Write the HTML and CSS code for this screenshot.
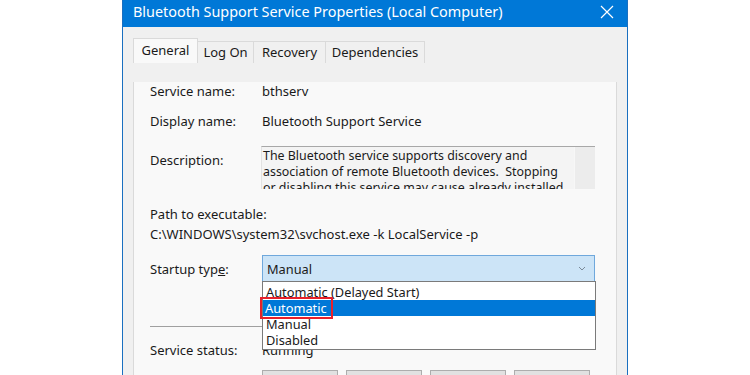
FILE: index.html
```html
<!DOCTYPE html>
<html lang="en">
<head>
  <meta charset="UTF-8">
  <meta name="viewport" content="width=device-width, initial-scale=1.0">
  <title>Bluetooth Support Service Properties</title>
  <link rel="stylesheet" href="styles.css">
</head>
<body>

<div class="window">
  <div class="titlebar">
    <span class="title">Bluetooth Support Service Properties (Local Computer)</span>
    <svg class="close" width="14" height="14" viewBox="0 0 14 14">
      <path d="M1 1 L13 13 M13 1 L1 13" stroke="#fff" stroke-width="1.2" fill="none"/>
    </svg>
  </div>

  <div class="dialog">
    <div class="tabs">
      <div class="tab active">General</div>
      <div class="tab logon">Log On</div>
      <div class="tab recovery">Recovery</div>
      <div class="tab deps">Dependencies</div>
    </div>

    <div class="panel">
      <div class="row first">
        <span class="label">Service name:</span>
        <span>bthserv</span>
      </div>
      <div class="row">
        <span class="label">Display name:</span>
        <span>Bluetooth Support Service</span>
      </div>
      <div class="row desc-row">
        <span class="label">Description:</span>
        <div class="desc">
          <div class="desc-text">The Bluetooth service supports discovery and association of remote Bluetooth devices.&nbsp; Stopping or disabling this service may cause already installed Bluetooth devices to fail to operate properly.</div>
          <div class="scroll"></div>
        </div>
      </div>

      <div class="path">
        <div>Path to executable:</div>
        <div>C:\WINDOWS\system32\svchost.exe -k LocalService -p</div>
      </div>

      <div class="row startup">
        <span class="label">Startup typ<u>e</u>:</span>
        <div class="select">
          <span>Manual</span>
          <svg width="8" height="5" viewBox="0 0 8 5">
            <path d="M1 1 L4 4 L7 1" stroke="#7a8a99" stroke-width="1" fill="none"/>
          </svg>
          <ul class="options">
            <li>Automatic (Delayed Start)</li>
            <li class="selected"><span class="mark">Automatic</span></li>
            <li>Manual</li>
            <li>Disabled</li>
          </ul>
        </div>
      </div>

      <hr class="sep">

      <div class="row">
        <span class="label">Service status:</span>
        <span>Running</span>
      </div>

      <div class="buttons">
        <div class="btn">Start</div>
        <div class="btn">Stop</div>
        <div class="btn">Pause</div>
        <div class="btn">Resume</div>
      </div>
    </div>
  </div>
</div>

</body>
</html>
```

FILE: styles.css
```css
body {
  margin: 0;
  background-color: #fff;
  font-family: 'Noto Sans', 'Open Sans', sans-serif;
  font-size: 13px;
  color: #1a1a1a;
  overflow: hidden;
}

.window {
  width: 504px;
  height: 375px;
  margin-left: 122px;
  border-left: 1px solid #1a6fc0;
  border-right: 1px solid #1a6fc0;
  overflow: hidden;
}

.titlebar {
  height: 27px;
  background-color: #0078d7;
  color: #fff;
  display: flex;
  align-items: flex-start;
  justify-content: space-between;
  padding: 2px 13px 0 10px;
  box-sizing: border-box;
}

.title {
  font-size: 14.4px;
  line-height: 20px;
}

.close {
  margin-top: 3px;
}

.dialog {
  background-color: #f0f0f0;
  height: 348px;
  padding: 12px 10px 0 10px;
}

.tabs {
  display: flex;
  align-items: flex-end;
  height: 24px;
}

.tab {
  height: 21px;
  line-height: 20px;
  text-align: center;
  border: 1px solid #dadada;
  border-bottom: none;
  border-left: none;
  background-color: #f0f0f0;
}

.tab.active {
  width: 63px;
  height: 24px;
  line-height: 22px;
  border-left: 1px solid #dadada;
  background-color: #f9f9f9;
}

.tab.logon {
  width: 55px;
}

.tab.recovery {
  width: 71px;
}

.tab.deps {
  width: 98px;
}

.panel {
  background-color: #f9f9f9;
  border: 1px solid #dadada;
  border-top: none;
  height: 330px;
  padding: 0 21px 0 16px;
}

.row {
  display: grid;
  grid-template-columns: 112px 1fr;
  align-items: center;
  line-height: 18px;
  margin-top: 12px;
}

.row.first {
  margin-top: 19px;
}

.desc-row {
  margin-top: 16px;
  align-items: start;
}

.desc-row .label {
  margin-top: 5px;
}

.desc {
  display: flex;
  height: 42px;
  margin-left: -1px;
  border-top: 1px solid #a8a8a8;
  border-left: 1px solid #e2e2e2;
  background-color: #f4f4f4;
  overflow: hidden;
}

.desc-text {
  flex: 1;
  padding: 1px 4px 0 1px;
  font-size: 12.4px;
  line-height: 16px;
}

.scroll {
  width: 20px;
  background-color: #ececec;
  border-left: 1px solid #f7f7f7;
}

.path {
  margin-top: 15px;
  line-height: 20px;
}

.startup {
  margin-top: 11px;
}

.select {
  position: relative;
  height: 25px;
  display: flex;
  align-items: center;
  justify-content: space-between;
  padding: 0 8px 0 4px;
  background-color: #cce4f7;
  border: 1px solid #6fa8dc;
  font-size: 12.8px;
}

.options {
  position: absolute;
  top: 100%;
  left: -1px;
  right: -2px;
  margin: 0;
  padding: 2px 0 1px 0;
  list-style: none;
  background-color: #fff;
  border: 1px solid #7a7a7a;
  z-index: 2;
}

.options li {
  height: 16px;
  line-height: 16px;
  padding-left: 3px;
}

.options li.selected {
  background-color: #0078d7;
  color: #fff;
}

.mark {
  display: inline-block;
  height: 18px;
  margin: -1px 0 0 -4px;
  padding: 0 4px 0 3px;
  line-height: 18px;
  outline: 2px solid #e8202a;
}

.sep {
  margin: 44px 0 0 0;
  border: none;
  border-top: 1px solid #a0a0a0;
}

.row + .sep + .row {
  margin-top: 14px;
}

.buttons {
  display: flex;
  gap: 8px;
  margin-top: 11px;
  margin-left: 112px;
}

.btn {
  width: 74px;
  height: 22px;
  line-height: 22px;
  text-align: center;
  border: 1px solid #adadad;
  background-color: #e1e1e1;
}
```
